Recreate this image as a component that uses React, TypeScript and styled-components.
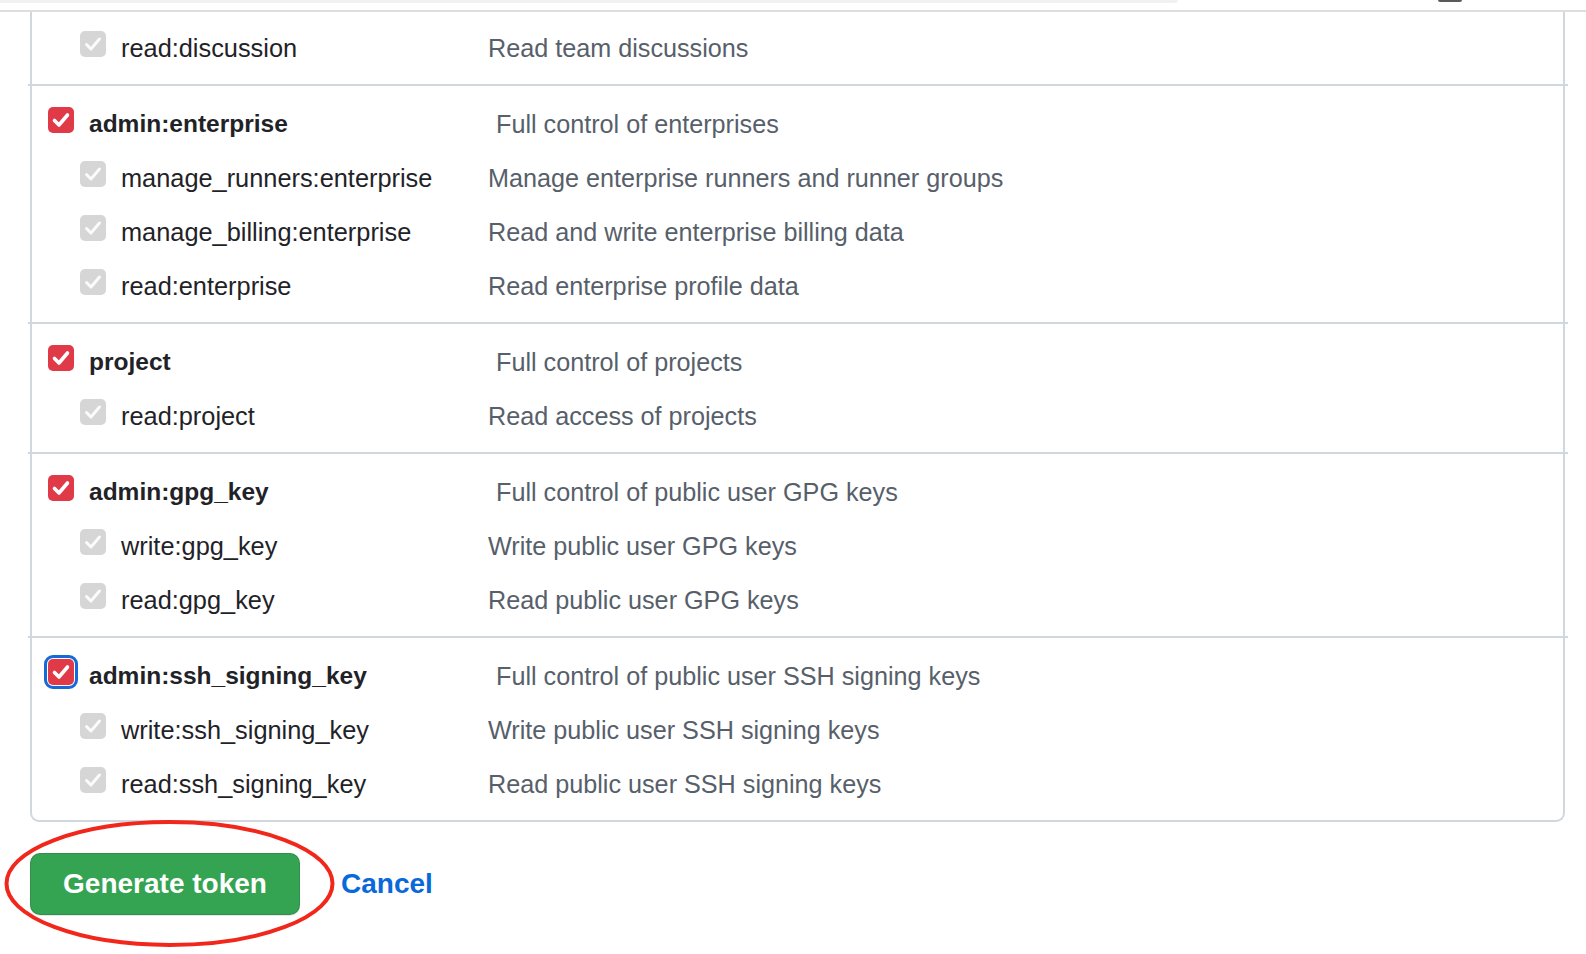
import React from "react";
import styled, { createGlobalStyle } from "styled-components";

const GlobalStyle = createGlobalStyle`
  html, body { margin: 0; padding: 0; background: #ffffff; }
  body { font-family: "Liberation Sans", Arial, sans-serif; color: #24292f; }
`;

const Page = styled.div`
  position: relative;
  width: 1586px;
  height: 954px;
  overflow: hidden;
  background: #ffffff;
`;

const TopBar = styled.div`
  height: 10px;
  border-bottom: 2px solid #dedede;
  display: flex;
  align-items: flex-start;
`;

const TopStrip = styled.div`
  width: 1178px;
  height: 3px;
  background: #f1f1f1;
  border-radius: 0 0 6px 0;
`;

const TopKnob = styled.div`
  margin-left: 260px;
  width: 24px;
  height: 2px;
  background: #5a5a5a;
  border-radius: 0 0 4px 4px;
`;

const Panel = styled.div`
  margin: 0 21px 0 30px;
  border: 2px solid #d0d7de;
  border-top: none;
  border-radius: 0 0 9px 9px;
`;

const Group = styled.div<{ $first?: boolean }>`
  margin: 0 -5px 0 -4px;
  padding: ${(p) => (p.$first ? "8px" : "10px")} 5px 10px 4px;
  border-top: ${(p) => (p.$first ? "none" : "2px solid #d0d7de")};
`;

const Row = styled.div<{ $parent?: boolean }>`
  display: grid;
  grid-template-columns: ${(p) => (p.$parent ? "448px" : "408px")} 1fr;
  align-items: center;
  height: 54px;
  padding-left: ${(p) => (p.$parent ? "16px" : "48px")};
`;

const Label = styled.div`
  display: flex;
  align-items: center;
  gap: 15px;
`;

const Box = styled.span<{ $parent?: boolean; $focus?: boolean }>`
  flex: none;
  width: 26px;
  height: 26px;
  margin-bottom: 6px;
  border-radius: 5px;
  background: ${(p) => (p.$parent ? "#e03a48" : "#d6d6d6")};
  display: flex;
  align-items: center;
  justify-content: center;
  outline: ${(p) => (p.$focus ? "3px solid #1768d9" : "none")};
  outline-offset: 1px;
`;

const Name = styled.span<{ $parent?: boolean }>`
  font-size: ${(p) => (p.$parent ? "24.5px" : "25.35px")};
  font-weight: ${(p) => (p.$parent ? 700 : 400)};
  color: #1f2328;
  white-space: nowrap;
  padding-top: 2px;
`;

const Desc = styled.span`
  font-size: 25.2px;
  color: #57606a;
  white-space: nowrap;
  padding-top: 2px;
`;

const Footer = styled.div`
  display: flex;
  align-items: center;
  gap: 41px;
  margin: 31px 0 0 30px;
`;

const PrimaryButton = styled.button`
  width: 270px;
  height: 62px;
  border: 1px solid rgba(27, 31, 36, 0.15);
  border-radius: 10px;
  background: #34a352;
  color: #ffffff;
  font-family: "Liberation Sans", Arial, sans-serif;
  font-size: 28px;
  font-weight: 700;
  cursor: pointer;
  box-shadow: 0 1px 0 rgba(27, 31, 36, 0.1);
`;

const CancelLink = styled.a`
  font-size: 28px;
  font-weight: 700;
  color: #0969da;
  text-decoration: none;
`;

const Annotation = styled.svg`
  position: absolute;
  left: 0;
  top: 810px;
  pointer-events: none;
`;

type Scope = { name: string; desc: string; focus?: boolean };
type ScopeGroup = { parent?: Scope; children: Scope[] };

const groups: ScopeGroup[] = [
  { children: [{ name: "read:discussion", desc: "Read team discussions" }] },
  {
    parent: { name: "admin:enterprise", desc: "Full control of enterprises" },
    children: [
      { name: "manage_runners:enterprise", desc: "Manage enterprise runners and runner groups" },
      { name: "manage_billing:enterprise", desc: "Read and write enterprise billing data" },
      { name: "read:enterprise", desc: "Read enterprise profile data" },
    ],
  },
  {
    parent: { name: "project", desc: "Full control of projects" },
    children: [{ name: "read:project", desc: "Read access of projects" }],
  },
  {
    parent: { name: "admin:gpg_key", desc: "Full control of public user GPG keys" },
    children: [
      { name: "write:gpg_key", desc: "Write public user GPG keys" },
      { name: "read:gpg_key", desc: "Read public user GPG keys" },
    ],
  },
  {
    parent: { name: "admin:ssh_signing_key", desc: "Full control of public user SSH signing keys", focus: true },
    children: [
      { name: "write:ssh_signing_key", desc: "Write public user SSH signing keys" },
      { name: "read:ssh_signing_key", desc: "Read public user SSH signing keys" },
    ],
  },
];

const Check: React.FC<{ parent?: boolean }> = ({ parent }) => (
  <svg width="26" height="26" viewBox="0 0 26 26" fill="none">
    <path
      d="M6.5 13.5 L11 18 L19.5 8"
      stroke="#ffffff"
      strokeWidth={parent ? 3.6 : 3}
      strokeLinecap="round"
      strokeLinejoin="round"
      opacity={parent ? 1 : 0.9}
    />
  </svg>
);

const ScopeRow: React.FC<{ scope: Scope; parent?: boolean }> = ({ scope, parent }) => (
  <Row $parent={parent}>
    <Label>
      <Box $parent={parent} $focus={scope.focus}>
        <Check parent={parent} />
      </Box>
      <Name $parent={parent}>{scope.name}</Name>
    </Label>
    <Desc>{scope.desc}</Desc>
  </Row>
);

export default function App() {
  return (
    <Page>
      <GlobalStyle />
      <TopBar>
        <TopStrip />
        <TopKnob />
      </TopBar>
      <Panel>
        {groups.map((g, i) => (
          <Group key={i} $first={i === 0}>
            {g.parent && <ScopeRow scope={g.parent} parent />}
            {g.children.map((c) => (
              <ScopeRow key={c.name} scope={c} />
            ))}
          </Group>
        ))}
      </Panel>
      <Footer>
        <PrimaryButton>Generate token</PrimaryButton>
        <CancelLink href="#">Cancel</CancelLink>
      </Footer>
      <Annotation width="345" height="144" viewBox="0 0 345 144">
        <ellipse cx="169.5" cy="73.5" rx="163" ry="61.5" fill="none" stroke="#f2271c" strokeWidth="4" />
      </Annotation>
    </Page>
  );
}
